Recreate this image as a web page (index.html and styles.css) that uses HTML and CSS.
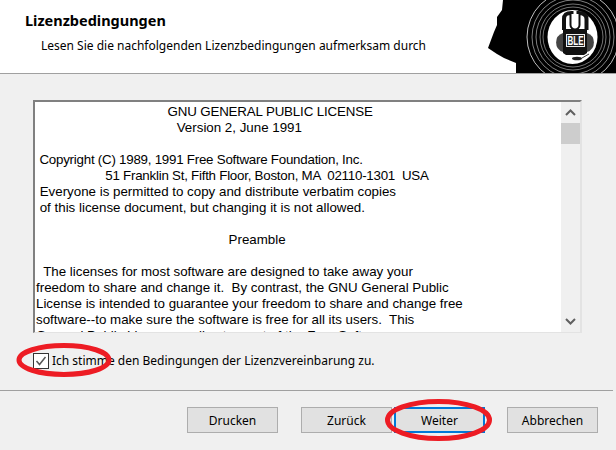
FILE: index.html
```html
<!DOCTYPE html>
<html lang="de">
  <head>
    <meta charset="UTF-8" />
    <meta name="viewport" content="width=device-width" />
    <title>Lizenzbedingungen</title>
    <link rel="stylesheet" href="styles.css">
  </head>
  <body>
    <div class="wizard">
      <div class="header">
        <div class="header-text">
          <div class="title">Lizenzbedingungen</div>
          <div class="subtitle">Lesen Sie die nachfolgenden Lizenzbedingungen aufmerksam durch</div>
        </div>
        <svg class="logo" width="128" height="73" viewBox="488 0 128 73">
          <path d="M503 0 L502 10 L497 17 L497 25 L494 32 L488 48 L497 54 L504 58 L516 63 L516 73 L616 73 L616 0 Z" fill="#000" />
          <g fill="none" stroke="#fff">
            <circle cx="573" cy="37" r="30" stroke-width="1" opacity="0.45" />
            <circle cx="573" cy="37" r="33" stroke-width="1" opacity="0.45" />
            <circle cx="573" cy="37" r="37" stroke-width="1" opacity="0.5" />
            <circle cx="573" cy="37" r="41" stroke-width="1" opacity="0.5" />
            <circle cx="573" cy="37" r="46" stroke-width="1" opacity="0.75" />
          </g>
          <ellipse cx="572.5" cy="37" rx="25" ry="27" fill="#fff" />
          <!-- headset -->
          <path d="M563 33 A10 10 0 0 0 563 52 Z" fill="#444" />
          <path d="M587 33 A10 10 0 0 1 587 52 Z" fill="#444" />
          <path d="M564 30 V19 C564 14 567 13 571.5 13 V25 C571.5 29.5 578.5 29.5 578.5 25 V13 C583 13 586.5 14 586.5 19 V30" fill="none" stroke="#111" stroke-width="4" />
          <path d="M571.5 14 V25 C571.5 29.5 578.5 29.5 578.5 25 V14 Z" fill="#fff" />
          <path d="M563 29 H587 V53 L584 55 H566 L563 53 Z" fill="#111" />
          <rect x="566" y="34" width="19" height="13" fill="#eee" />
          <rect x="567" y="35" width="17" height="11" fill="#222" />
          <text x="567.5" y="45" class="logo-text" textLength="16" lengthAdjust="spacingAndGlyphs">BLE</text>
          <path d="M582 58 L589 54" fill="none" stroke="#333" stroke-width="1" />
          <ellipse cx="577" cy="58.5" rx="5" ry="1.8" fill="#222" />
        </svg>
      </div>

      <div class="content">
        <div class="license-box">
          <pre class="license-text"><span class="tight-title">                                     GNU GENERAL PUBLIC LICENSE</span>
                                      Version 2, June 1991

<span class="tight"> Copyright (C) 1989, 1991 Free Software Foundation, Inc.</span>
<span class="tight">                    51 Franklin St, Fifth Floor, Boston, MA  02110-1301  USA</span>
 Everyone is permitted to copy and distribute verbatim copies
 of this license document, but changing it is not allowed.

                                                    Preamble

  The licenses for most software are designed to take away your
freedom to share and change it.  By contrast, the GNU General Public
License is intended to guarantee your freedom to share and change free
software--to make sure the software is free for all its users.  This
General Public License applies to most of the Free Software</pre>
          <div class="scrollbar">
            <svg width="19" height="17" viewBox="0 0 19 17"><path d="M5 11 L9.5 6.5 L14 11" fill="none" stroke="#606060" stroke-width="2" /></svg>
            <div class="thumb"></div>
            <div class="track"></div>
            <svg width="19" height="17" viewBox="0 0 19 17"><path d="M5 6 L9.5 10.5 L14 6" fill="none" stroke="#606060" stroke-width="2" /></svg>
          </div>
        </div>
        <label class="agree">
          <span class="checkbox">
            <svg width="14" height="14" viewBox="0 0 14 14"><path d="M2.5 7 L5.5 10.5 L11.5 3" fill="none" stroke="#555" stroke-width="1.5" /></svg>
          </span>
          <span>Ich stimme den Bedingungen der Lizenzvereinbarung zu.</span>
        </label>
      </div>

      <div class="footer">
        <button class="btn print">Drucken</button>
        <button class="btn">Zurück</button>
        <button class="btn primary">Weiter</button>
        <button class="btn cancel">Abbrechen</button>
      </div>

      <!-- red hand drawn marks on top of the screenshot -->
      <svg class="mark mark-check" width="98" height="38" viewBox="0 0 98 38"><ellipse cx="49" cy="19" rx="45" ry="14.5" /></svg>
      <svg class="mark mark-next" width="111" height="46" viewBox="0 0 111 46"><ellipse cx="55.5" cy="23" rx="51" ry="18.5" /></svg>
    </div>
  </body>
</html>
```

FILE: styles.css
```css
body {
  margin: 0;
  padding: 0;
  background-color: #f0f0f0;
  color: #000;
  font-family: "Noto Sans", sans-serif;
  font-size: 12px;
}

.wizard {
  position: relative;
  width: 616px;
  height: 450px;
  overflow: hidden;
}

.header {
  display: flex;
  justify-content: space-between;
  height: 73px;
  background-color: white;
  border-bottom: 1px solid #a0a0a0;
}

.header-text {
  padding: 11px 0 0 25px;
}

.title {
  font-size: 14.5px;
  font-weight: bold;
  line-height: 18px;
}

.subtitle {
  margin: 9px 0 0 16px;
  line-height: 16px;
}

.logo {
  display: block;
}

.logo-text {
  fill: #fff;
  font-family: "Liberation Sans", sans-serif;
  font-size: 13px;
  font-weight: bold;
}

.content {
  padding: 26px 0 0 33px;
}

.license-box {
  display: flex;
  width: 545px;
  height: 230px;
  background-color: white;
  border-top: 2px solid #808080;
  border-left: 2px solid #808080;
  border-right: 2px solid #e3e3e3;
  border-bottom: 1px solid #e3e3e3;
}

.license-text {
  flex: 1;
  margin: 0;
  padding: 2px 0 0 1px;
  overflow: hidden;
  font-family: "Liberation Sans", Arial, sans-serif;
  font-size: 13.33px;
  line-height: 16px;
  color: #000;
}

.tight {
  letter-spacing: -0.24px;
}

.tight-title {
  letter-spacing: -0.15px;
}

.scrollbar {
  display: flex;
  flex-direction: column;
  width: 19px;
  background-color: #f0f0f0;
}

.scrollbar svg {
  display: block;
  flex: none;
  margin: 2px 0;
}

.thumb {
  flex: none;
  height: 21px;
  background-color: #cdcdcd;
}

.track {
  flex: 1;
}

.agree {
  display: flex;
  align-items: center;
  gap: 3px;
  margin-top: 20px;
  line-height: 16px;
}

.checkbox {
  display: flex;
  flex: none;
  box-sizing: border-box;
  width: 16px;
  height: 16px;
  background-color: white;
  border: 1px solid #333;
}

.footer {
  display: flex;
  margin-top: 21px;
  padding: 16px 0 0 187px;
  border-top: 1px solid #a0a0a0;
  width: 426px;
}

.btn {
  box-sizing: border-box;
  width: 91px;
  height: 26px;
  padding: 0;
  background-color: #e1e1e1;
  border: 1px solid #adadad;
  color: #000;
  font-family: "Noto Sans", sans-serif;
  font-size: 12px;
}

.print {
  margin-right: 23px;
}

.primary {
  margin-left: 2px;
  border: 2px solid #0078d7;
}

.cancel {
  margin-left: 22px;
}

.mark {
  position: absolute;
  fill: none;
  stroke: #ed1c24;
  stroke-width: 5;
}

.mark-check {
  left: 15px;
  top: 341px;
}

.mark-next {
  left: 383px;
  top: 397px;
}
```
